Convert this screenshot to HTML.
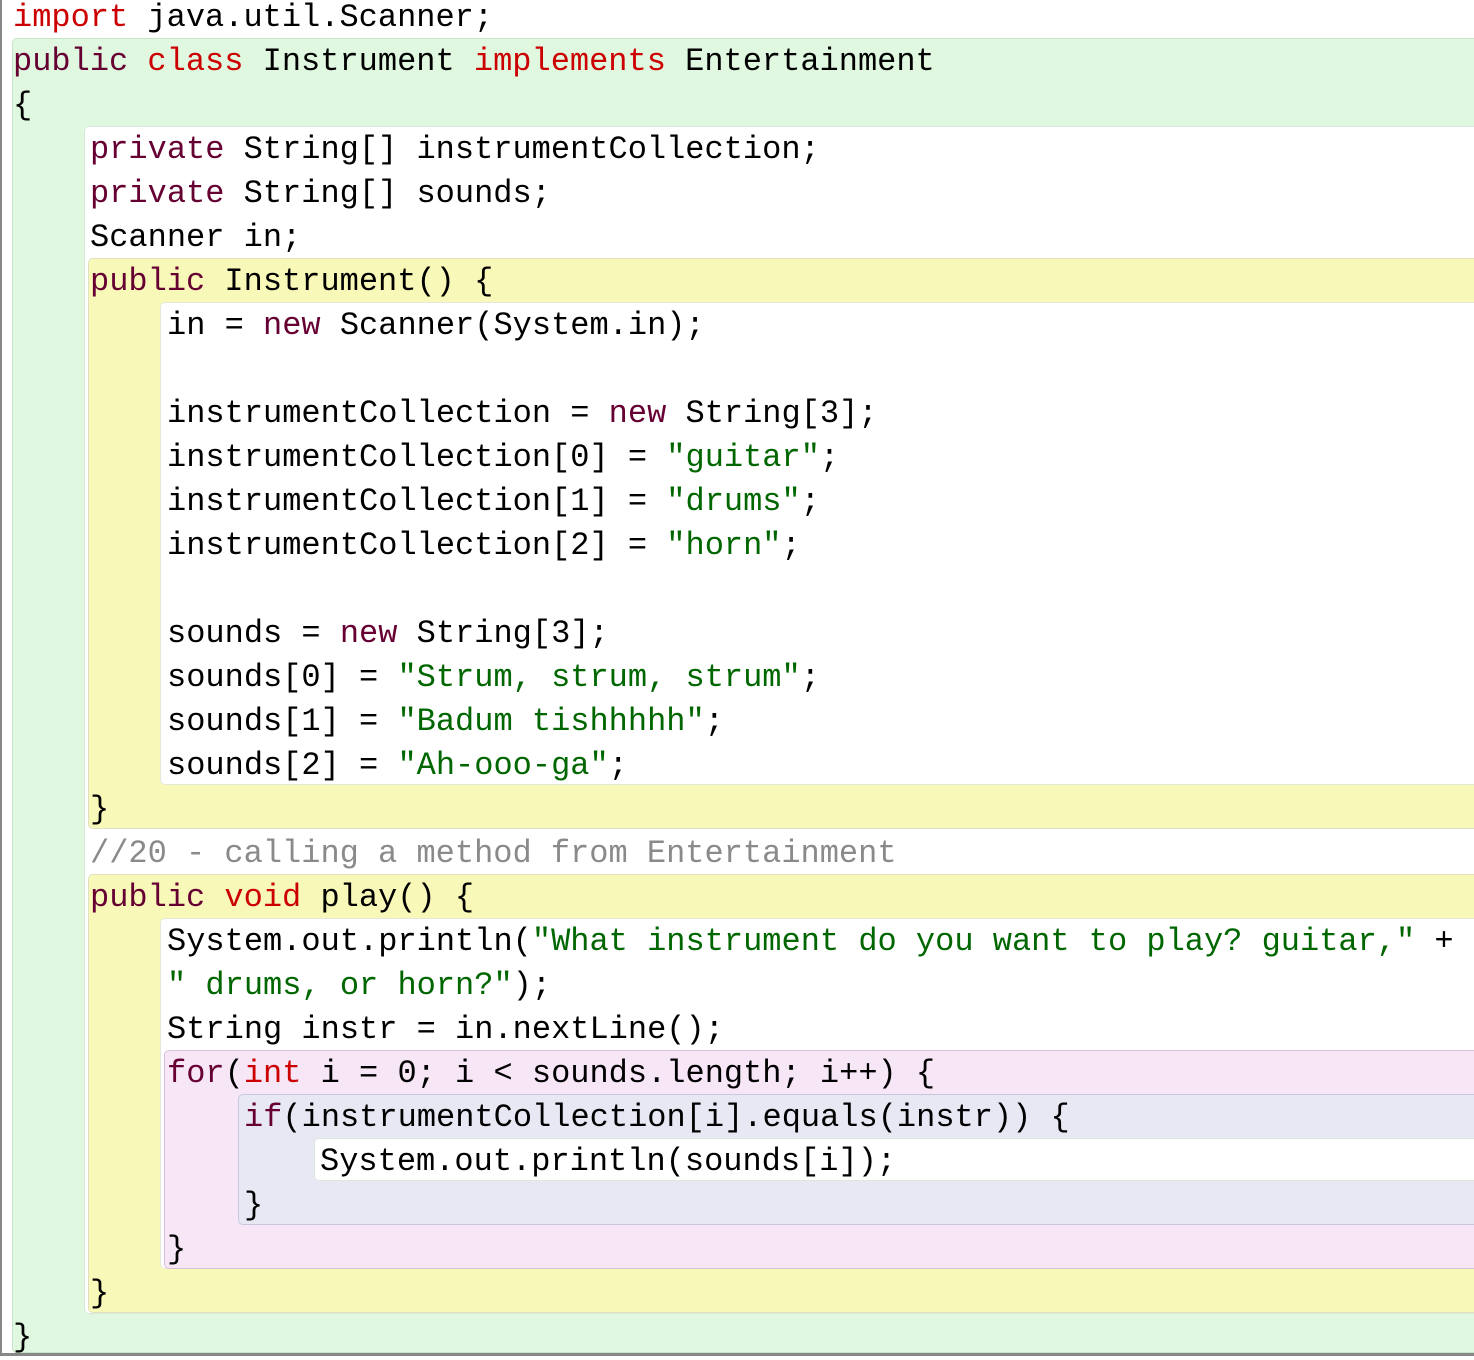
<!DOCTYPE html>
<html><head><meta charset="utf-8"><style>
*{margin:0;padding:0;box-sizing:border-box}
body{width:1474px;height:1356px;background:#fff;position:relative;overflow:hidden;font-family:"Liberation Mono",monospace;font-size:32px;color:#000}
.b{position:absolute;right:-10px;border:1.5px solid;border-radius:5px}
.l{position:absolute;height:44px;line-height:44px;white-space:pre;margin-top:2px}
.k{color:#660033}.r{color:#cc0000}.s{color:#006600}.c{color:#8a8a8a}
</style></head><body>
<div style="position:absolute;left:0;top:0;width:2px;height:1356px;background:#888"></div>
<div style="position:absolute;left:0;top:1353px;width:1474px;height:3px;background:#888"></div>
<div class="b" style="left:12px;top:38px;height:1315px;background:#e0f8e0;border-color:#c8e4c8"></div>
<div class="b" style="left:84px;top:126px;height:1188px;background:#fff;border-color:#dde8dd"></div>
<div class="b" style="left:88px;top:258px;height:571px;background:#f8f8b8;border-color:#e0e0c0"></div>
<div class="b" style="left:160px;top:302px;height:483px;background:#fff;border-color:#e4e8d8"></div>
<div class="b" style="left:88px;top:874px;height:439px;background:#f8f8b8;border-color:#e0e0c0"></div>
<div class="b" style="left:160px;top:918px;height:351px;background:#fff;border-color:#e4e8d8"></div>
<div class="b" style="left:164px;top:1050px;height:219px;background:#f6e6f6;border-color:#d8c0d8"></div>
<div class="b" style="left:238px;top:1094px;height:131px;background:#e8e8f4;border-color:#c8c8dc"></div>
<div class="b" style="left:314px;top:1138px;height:43px;background:#fff;border-color:#dde8dd"></div>

<div class="l" style="left:13px;top:-6px"><span class="r">import</span> java.util.Scanner;</div>
<div class="l" style="left:13px;top:38px"><span class="k">public</span> <span class="r">class</span> Instrument <span class="r">implements</span> Entertainment</div>
<div class="l" style="left:13px;top:82px">{</div>
<div class="l" style="left:90px;top:126px"><span class="k">private</span> String[] instrumentCollection;</div>
<div class="l" style="left:90px;top:170px"><span class="k">private</span> String[] sounds;</div>
<div class="l" style="left:90px;top:214px">Scanner in;</div>
<div class="l" style="left:90px;top:258px"><span class="k">public</span> Instrument() {</div>
<div class="l" style="left:167px;top:302px">in = <span class="k">new</span> Scanner(System.in);</div>
<div class="l" style="left:167px;top:390px">instrumentCollection = <span class="k">new</span> String[3];</div>
<div class="l" style="left:167px;top:434px">instrumentCollection[0] = <span class="s">"guitar"</span>;</div>
<div class="l" style="left:167px;top:478px">instrumentCollection[1] = <span class="s">"drums"</span>;</div>
<div class="l" style="left:167px;top:522px">instrumentCollection[2] = <span class="s">"horn"</span>;</div>
<div class="l" style="left:167px;top:610px">sounds = <span class="k">new</span> String[3];</div>
<div class="l" style="left:167px;top:654px">sounds[0] = <span class="s">"Strum, strum, strum"</span>;</div>
<div class="l" style="left:167px;top:698px">sounds[1] = <span class="s">"Badum tishhhhh"</span>;</div>
<div class="l" style="left:167px;top:742px">sounds[2] = <span class="s">"Ah-ooo-ga"</span>;</div>
<div class="l" style="left:90px;top:786px">}</div>
<div class="l c" style="left:90px;top:830px">//20 - calling a method from Entertainment</div>
<div class="l" style="left:90px;top:874px"><span class="k">public</span> <span class="r">void</span> play() {</div>
<div class="l" style="left:167px;top:918px">System.out.println(<span class="s">"What instrument do you want to play? guitar,"</span> +</div>
<div class="l" style="left:167px;top:962px"><span class="s">" drums, or horn?"</span>);</div>
<div class="l" style="left:167px;top:1006px">String instr = in.nextLine();</div>
<div class="l" style="left:167px;top:1050px"><span class="k">for</span>(<span class="r">int</span> i = 0; i &lt; sounds.length; i++) {</div>
<div class="l" style="left:244px;top:1094px"><span class="k">if</span>(instrumentCollection[i].equals(instr)) {</div>
<div class="l" style="left:320px;top:1138px">System.out.println(sounds[i]);</div>
<div class="l" style="left:244px;top:1182px">}</div>
<div class="l" style="left:167px;top:1226px">}</div>
<div class="l" style="left:90px;top:1270px">}</div>
<div class="l" style="left:13px;top:1314px">}</div>
</body></html>
